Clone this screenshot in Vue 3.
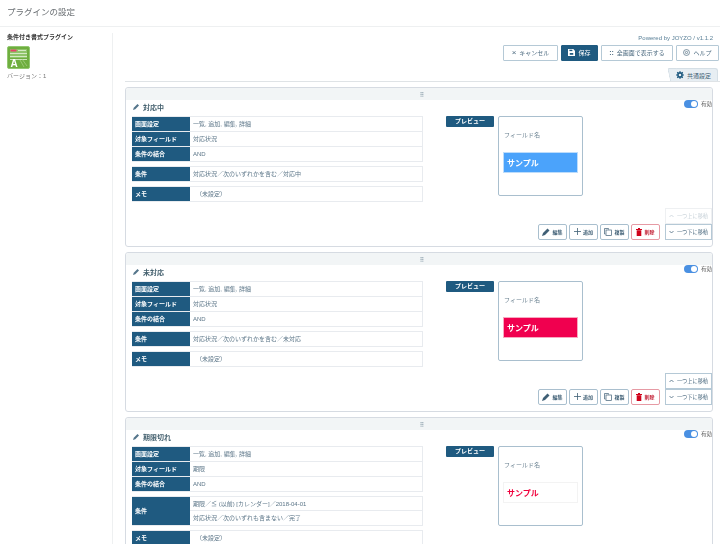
<script setup>
const cards = [
  { title: '対応中', field: '対応状況', conds: ['対応状況／次のいずれかを含む／対応中'], sample: 'blue', up: false },
  { title: '未対応', field: '対応状況', conds: ['対応状況／次のいずれかを含む／未対応'], sample: 'red', up: true },
  { title: '期限切れ', field: '期限', conds: ['期限／≦ (以前) [カレンダー]／2018-04-01', '対応状況／次のいずれも含まない／完了'], sample: 'plain', up: true },
]
</script>

<template>
  <div class="page">
    <header class="top">プラグインの設定</header>
    <div class="layout">
      <aside class="side">
        <div class="pname">条件付き書式プラグイン</div>
        <svg class="logo" width="23" height="23" viewBox="0 0 23 23">
          <rect x=".5" y=".5" width="22" height="22" rx="1.500" fill="#6fae3f" stroke="#93c871" />
          <rect x="3" y="3" width="17" height="9" fill="#8fc46a" />
          <rect x="3.500" y="3.500" width="6" height="2" fill="#e8426a" />
          <path d="M11 4.500h8M3 7.500h17M3 10.500h17M3 13.500h17" stroke="#e6f2da" stroke-width="0.8" />
          <path d="M13 14l4 7M15 13l5 7" stroke="#a9d28a" stroke-width="0.7" />
          <text x="3.500" y="21" font-size="10" font-weight="700" fill="#fff" font-family="Liberation Sans">A</text>
        </svg>
        <div class="ver">バージョン：1</div>
      </aside>
      <main class="main">
        <div class="powered">Powered by JOYZO / v1.1.2</div>
        <div class="toolbar">
          <button class="tb w62"><span class="ic">×</span>キャンセル</button>
          <button class="tb save w37">
            <svg width="7" height="7" viewBox="0 0 8 8"><path d="M0 0h6l2 2v6H0z" fill="#fff" /><rect x="2" y="4.600" width="4" height="2" fill="#1f5a80" /><rect x="1.600" y="0.800" width="3.400" height="1.600" fill="#1f5a80" /></svg>
            保存
          </button>
          <button class="tb w72"><span class="ic dots">::</span>全画面で表示する</button>
          <button class="tb w43">
            <svg width="7" height="7" viewBox="0 0 8 8"><circle cx="4" cy="4" r="3.400" fill="none" stroke="#4d6b80" stroke-width="0.8" /><circle cx="4" cy="4" r="1.300" fill="none" stroke="#4d6b80" stroke-width="0.8" /></svg>
            ヘルプ
          </button>
        </div>
        <div class="tabrow">
          <div class="tab">
            <svg width="8" height="8" viewBox="0 0 10 10"><circle cx="5" cy="5" r="2.600" fill="none" stroke="#1f5a80" stroke-width="2" /><path d="M5 0v2M5 8v2M0 5h2M8 5h2M1.500 1.500l1.400 1.400M7.100 7.100l1.400 1.400M8.500 1.500L7.100 2.900M2.900 7.100L1.500 8.500" stroke="#1f5a80" stroke-width="1.300" /></svg>
            共通設定
          </div>
        </div>
        <section v-for="c in cards" :key="c.title" class="card">
          <div class="grip"><span>⠿</span></div>
          <div class="titlebar">
            <div class="title">
              <svg width="6" height="6" viewBox="0 0 8 8"><path d="M0 8l1-3 5-5 2 2-5 5z" fill="#54758a" /></svg>
              {{ c.title }}
            </div>
            <div class="active"><i class="toggle"><b></b></i>有効</div>
          </div>
          <div class="body">
            <div class="left">
              <div class="tbl">
                <div class="row"><div class="lab">画面設定</div><div class="val">一覧, 追加, 編集, 詳細</div></div>
                <div class="row"><div class="lab">対象フィールド</div><div class="val">{{ c.field }}</div></div>
                <div class="row"><div class="lab">条件の結合</div><div class="val">AND</div></div>
              </div>
              <div class="tbl">
                <div class="row">
                  <div class="lab">条件</div>
                  <div class="vals"><div v-for="t in c.conds" :key="t" class="val cond">{{ t }}</div></div>
                </div>
              </div>
              <div class="tbl">
                <div class="row"><div class="lab">メモ</div><div class="val ind">（未設定）</div></div>
              </div>
            </div>
            <div class="right">
              <div class="pv">
                <div class="badge">プレビュー</div>
                <div class="pvbox">
                  <div class="fname">フィールド名</div>
                  <div class="sample" :class="c.sample">サンプル</div>
                </div>
              </div>
              <div class="actions">
                <button class="ab">
                  <svg width="8" height="8" viewBox="0 0 8 8"><path d="M0 8l1-3 4.500-4.500 2 2L3 7z" fill="#3f5f75" /></svg>
                  編集
                </button>
                <button class="ab"><svg width="7" height="7" viewBox="0 0 7 7"><path d="M3.500 0v7M0 3.500h7" stroke="#3f5f75" stroke-width="0.8" /></svg>追加</button>
                <button class="ab"><svg width="8" height="8" viewBox="0 0 8 8"><path d="M0.500 0.500h4v1M0.500 0.500v5.500h1" fill="none" stroke="#3f5f75" stroke-width="0.7" /><rect x="2" y="2" width="5.500" height="5.600" fill="none" stroke="#3f5f75" stroke-width="0.7" /></svg>複製</button>
                <button class="ab del"><svg width="6" height="8" viewBox="0 0 6 8"><path d="M0 1h6v1H0zM2 0h2v1H2zM.7 2.300h4.600V8H.7z" fill="#d0021b" /></svg>削除</button>
                <div class="moves">
                  <button class="mv" :class="{ off: !c.up }"><svg width="5" height="4" viewBox="0 0 5 4"><path d="M.5 3l2-2 2 2" fill="none" stroke="currentColor" stroke-width="0.8" /></svg>一つ上に移動</button>
                  <button class="mv"><svg width="5" height="4" viewBox="0 0 5 4"><path d="M.5 1l2 2 2-2" fill="none" stroke="currentColor" stroke-width="0.8" /></svg>一つ下に移動</button>
                </div>
              </div>
            </div>
          </div>
        </section>
      </main>
    </div>
  </div>
</template>

<style>
html, body { margin: 0; height: 544px; overflow: hidden; background: #fff; }
</style>

<style scoped>
.page { width: 720px; height: 544px; overflow: hidden; font-family: "Liberation Sans", "Noto Sans CJK JP", sans-serif; color: #5c7688; font-size: 6px; filter: blur(0.3px); }
.top { height: 27px; box-sizing: border-box; border-bottom: 1px solid #eef0f1; padding: 5px 0 0 7px; font-size: 8.500px; line-height: 14px; color: #6a6f73; }
.layout { display: flex; }
.side { width: 113px; flex: none; box-sizing: border-box; border-right: 1px solid #eef0f1; height: 511px; margin-top: 6px; }
.pname { padding-left: 7px; font-size: 6px; line-height: 9px; font-weight: 700; color: #333; }
.logo { display: block; margin: 4px 0 0 7px; }
.ver { padding-left: 7px; margin-top: 3px; line-height: 9px; color: #777; font-size: 6px; }
.main { flex: 1; padding: 7px 0 0 12px; min-width: 0; }
.powered { text-align: right; padding-right: 7px; font-size: 6px; line-height: 8px; color: #5b8098; }
.toolbar { display: flex; justify-content: flex-end; gap: 3px; margin-top: 3px; padding-right: 1px; }
button { font: inherit; margin: 0; cursor: pointer; }
.tb { height: 16px; box-sizing: border-box; background: #fff; border: 1px solid #b5c9d6; border-radius: 1px; color: #4d6b80; display: flex; align-items: center; justify-content: center; gap: 3px; padding: 0 0 1px; font-size: 6px; }
.w62 { width: 55px; }
.w37 { width: 37px; }
.w72 { width: 72px; }
.w43 { width: 43px; }
.save { background: #1f5a80; border-color: #1f5a80; color: #fff; }
.ic { font-size: 8px; line-height: 8px; }
.dots { font-weight: 700; font-size: 7px; }
.tabrow { display: flex; justify-content: flex-end; margin-top: 7px; border-bottom: 1px solid #dfe3e6; height: 13px; padding-right: 2px; }
.tab { position: relative; width: 48px; height: 13px; box-sizing: border-box; background: #e7eef3; border: 1px solid #d5dfe6; border-width: 1px 1px 0 0; border-radius: 0 3px 0 0; display: flex; align-items: center; justify-content: center; gap: 3px; color: #3f5f75; }
.tab::before { content: ""; position: absolute; left: 0; top: -1px; bottom: 0; width: 8px; background: #e7eef3; border: 1px solid #d5dfe6; border-width: 1px 0 0 1px; border-radius: 2px 0 0 0; transform: skewX(12deg); transform-origin: bottom left; }
.tab > svg { position: relative; }
.card { width: 588px; box-sizing: border-box; border: 1px solid #d6dbe2; border-radius: 3px; margin-bottom: 5px; }
.card:first-of-type { margin-top: 5px; }
.grip { height: 12px; background: #f2f5f6; border-radius: 3px 3px 0 0; display: flex; align-items: center; justify-content: center; color: #5c7688; font-size: 6px; font-family: "DejaVu Sans", sans-serif; padding-left: 6px; }
.titlebar { display: flex; justify-content: space-between; align-items: center; height: 16px; padding: 0 0 0 7px; }
.title { display: flex; align-items: center; gap: 4px; font-size: 7px; font-weight: 700; color: #45616f; margin-top: -2px; }
.active { display: flex; align-items: center; gap: 3px; font-size: 5.500px; color: #555; margin: -8px 0 0 0; }
.toggle { display: block; width: 14px; height: 8px; border-radius: 4px; background: #4a90e2; position: relative; }
.toggle b { position: absolute; right: 1px; top: 1px; width: 6px; height: 6px; border-radius: 50%; background: #fff; }
.body { display: flex; padding-left: 6px; }
.left { width: 291px; flex: none; display: flex; flex-direction: column; gap: 4px; padding-bottom: 44px; }
.tbl { border: 1px solid #e8ebef; border-left: 0; }
.row { display: flex; min-height: 14px; border-bottom: 1px solid #e8ebef; }
.row:last-child { border-bottom: 0; }
.lab { width: 58px; flex: none; background: #1f5a80; color: #fff; font-size: 6px; font-weight: 700; padding: 0 0 1px 3px; box-sizing: border-box; display: flex; align-items: center; }
.val { padding: 0 0 1px 3px; box-sizing: border-box; display: flex; align-items: center; font-size: 6px; min-height: 14px; }
.vals { flex: 1; }
.cond { border-bottom: 1px solid #e8ebef; }
.cond:last-child { border-bottom: 0; }
.ind { padding-left: 6px; }
.right { flex: 1; padding: 0 0 6px 23px; display: flex; flex-direction: column; }
.pv { display: flex; gap: 4px; align-items: flex-start; }
.badge { width: 48px; height: 11px; border-radius: 1px; background: #1f5a80; color: #fff; font-weight: 700; font-size: 6px; text-align: center; line-height: 10px; }
.pvbox { width: 85px; height: 80px; box-sizing: border-box; border: 1px solid #a9bfce; border-radius: 2px; padding: 0 5px; }
.fname { margin-top: 14px; line-height: 9px; font-size: 6px; color: #6b8291; }
.sample { margin: 12px -1px 0; height: 21px; padding: 0 0 1px 3px; display: flex; align-items: center; font-size: 8px; font-weight: 700; box-sizing: border-box; border: 1px solid #f3f3f3; background-clip: padding-box; }
.blue { background-color: #4ba3fb; color: #fff; border-color: #bcdcfb; }
.red { background-color: #f0004f; color: #fff; border-color: #f8a8c0; }
.plain { color: #f0003c; }
.actions { display: flex; justify-content: flex-end; align-items: flex-end; gap: 2px; margin-top: auto; }
.ab { width: 29px; height: 16px; box-sizing: border-box; background: #fff; border: 1px solid #a9bfce; border-radius: 2px; padding: 0 0 1px; display: flex; align-items: center; justify-content: center; gap: 2px; font-size: 5px; font-weight: 700; color: #3f5f75; }
.del { border-color: #e69aa4; color: #c0172d; }
.moves { margin-left: 3px; display: flex; flex-direction: column; width: 47px; }
.mv { width: 47px; height: 16px; box-sizing: border-box; background: #fff; border: 1px solid #b5c9d6; padding: 0 0 1px; display: flex; align-items: center; justify-content: center; gap: 3px; font-size: 5.200px; color: #4d6b80; white-space: nowrap; }
.mv.off { border-color: #eef0f2; color: #c8d2d9; }
</style>
